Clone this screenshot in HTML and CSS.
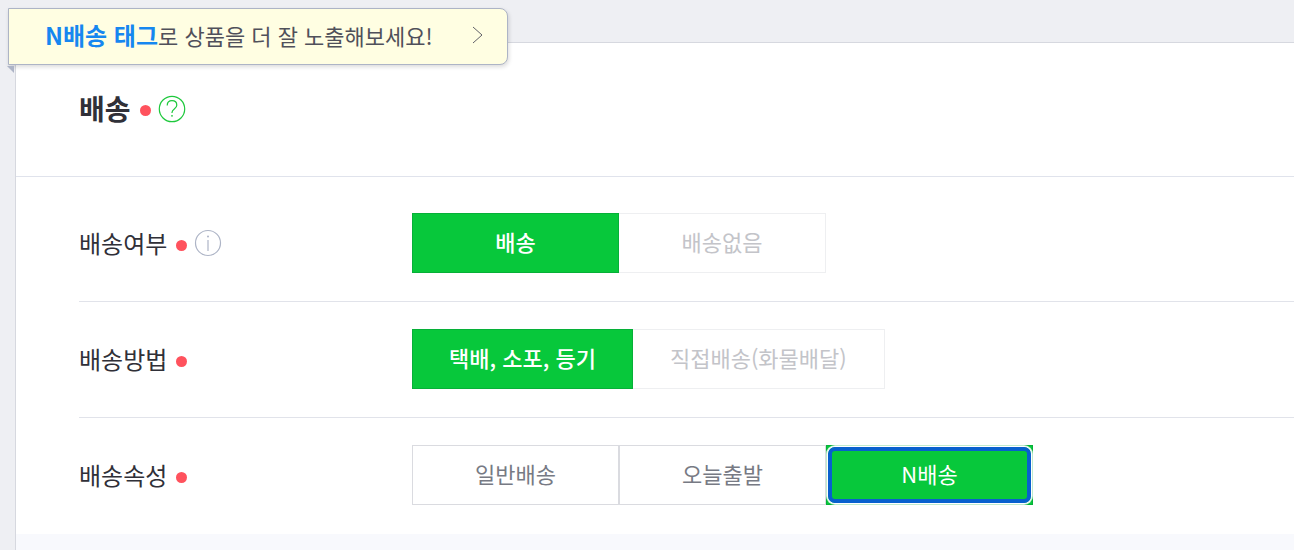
FILE: index.html
```html
<!DOCTYPE html>
<html lang="ko">
  <head>
    <meta charset="UTF-8" />
    <meta name="viewport" content="width=device-width, initial-scale=1.0" />
    <title>배송</title>
    <link rel="stylesheet" href="styles.css">
  </head>
  <body>
    <a class="notice" href="#attribute">
      <span><strong>N배송 태그</strong>로 상품을 더 잘 노출해보세요!</span>
      <svg class="arrow" width="12" height="18" viewBox="0 0 12 18" aria-hidden="true">
        <path d="M1 1l9 8-9 8" />
      </svg>
    </a>

    <main class="panel">
      <section class="section">
        <header class="section-header">
          <h2>배송</h2>
          <span class="required"></span>
          <button class="icon-button help" type="button" aria-label="도움말">
            <svg width="28" height="28" viewBox="0 0 28 28">
              <circle cx="14" cy="14" r="12.7" />
              <path d="M9.2 10.6c0-2.9 2-4.9 4.8-4.9s4.8 1.9 4.8 4.5c0 3.7-4.8 3.8-4.8 7.2v.6" />
              <circle class="dot" cx="14" cy="20.8" r="0.9" />
            </svg>
          </button>
        </header>

        <div class="row">
          <div class="label">
            <span id="use">배송여부</span>
            <span class="required"></span>
            <button class="icon-button info" type="button" aria-label="안내">
              <svg width="28" height="28" viewBox="0 0 28 28">
                <circle cx="14" cy="14" r="12.5" />
                <path d="M14 11v11" />
                <circle class="dot" cx="14" cy="7.5" r="1" />
              </svg>
            </button>
          </div>
          <div class="options" role="group" aria-labelledby="use">
            <button class="option active" type="button">배송</button>
            <button class="option" type="button" disabled>배송없음</button>
          </div>
        </div>

        <div class="row">
          <div class="label">
            <span id="method">배송방법</span>
            <span class="required"></span>
          </div>
          <div class="options" role="group" aria-labelledby="method">
            <button class="option active" type="button">택배, 소포, 등기</button>
            <button class="option" type="button" disabled>직접배송(화물배달)</button>
          </div>
        </div>

        <div class="row">
          <div class="label">
            <span id="attribute">배송속성</span>
            <span class="required"></span>
          </div>
          <div class="options" role="group" aria-labelledby="attribute">
            <button class="option" type="button">일반배송</button>
            <button class="option" type="button">오늘출발</button>
            <button class="option active focused" type="button">N배송</button>
          </div>
        </div>
      </section>
    </main>
  </body>
</html>
```

FILE: styles.css
```css
* {
  box-sizing: border-box;
}
body {
  margin: 0;
  padding: 42px 0 0 15px;
  min-height: 100vh;
  display: flex;
  background: #eeeff3;
  color: #303038;
  font-family: "Noto Sans CJK KR", sans-serif;
}
button {
  font-family: inherit;
  cursor: pointer;
}
.notice {
  position: absolute;
  top: 8px;
  left: 8px;
  display: flex;
  align-items: center;
  gap: 39px;
  height: 57px;
  padding: 0 23px 4px 36px;
  border: 1px solid #adb4c6;
  border-radius: 0 8px 8px 0;
  background: #fffee2;
  box-shadow: 1px 2px 4px rgba(0, 0, 0, 0.14);
  color: #50505a;
  font-size: 22px;
  line-height: 32px;
  text-decoration: none;
  white-space: nowrap;
}
.notice::after {
  content: "";
  position: absolute;
  top: 57px;
  left: -2px;
  border-top: 7px solid #adb4c6;
  border-left: 7px solid transparent;
}
.notice strong {
  color: #1687f0;
  font-size: 24px;
  font-weight: bold;
}
.arrow {
  fill: none;
  stroke: #606068;
}
.panel {
  flex: 1;
  border-top: 1px solid #d6d8df;
  border-left: 1px solid #d6d8df;
  background: #f8f9fd;
}
.section {
  background: #fff;
}
.section-header {
  display: flex;
  align-items: center;
  height: 134px;
  padding: 0 0 2px 63px;
  border-bottom: 1px solid #e0e3ec;
}
.section-header h2 {
  margin: 0;
  padding-bottom: 2px;
  font-size: 28px;
  line-height: 40px;
}
.required {
  width: 11px;
  height: 11px;
  margin: 4px 0 0 9px;
  border-radius: 50%;
  background: #ff525d;
}
.icon-button {
  width: 28px;
  height: 28px;
  margin-left: 7px;
  padding: 0;
  border: 0;
  background: none;
}
.icon-button svg {
  display: block;
  fill: none;
  stroke-width: 1.2;
}
.help svg {
  stroke: #1ec83c;
}
.help .dot {
  fill: #1ec83c;
  stroke: none;
}
.info svg {
  stroke: #adb4c6;
}
.info .dot {
  fill: #adb4c6;
  stroke: none;
}
.row {
  display: flex;
  align-items: center;
  margin-left: 63px;
  padding: 27px 0 28px;
  border-bottom: 1px solid #e1e3ea;
}
.section-header + .row {
  padding-top: 36px;
}
.row:last-child {
  padding-bottom: 29px;
  border-bottom: 0;
}
.label {
  display: flex;
  align-items: center;
  flex: 0 0 333px;
  font-size: 24px;
  line-height: 36px;
}
.options {
  display: flex;
}
.option {
  position: relative;
  min-width: 207px;
  height: 60px;
  padding: 0 36px 4px;
  border: 1px solid #dadbe0;
  background: #fff;
  color: #777a84;
  font-size: 22px;
  line-height: 32px;
}
.option:disabled {
  padding: 0 37px 4px;
  border-color: #eeeff1;
  border-left: 0;
  color: #c3c4c9;
  cursor: default;
}
.option.active {
  border-color: #06b038;
  background: #07c83b;
  color: #fff;
  font-weight: 500;
}
.option.focused {
  outline: none;
  font-weight: normal;
}
.option.focused::after {
  content: "";
  position: absolute;
  inset: 1px;
  border: 4px solid #0860ce;
  border-radius: 7px;
  box-shadow: 0 0 0 1px #fff, 0 0 0 2px rgba(255, 255, 255, 0.75);
}
```
